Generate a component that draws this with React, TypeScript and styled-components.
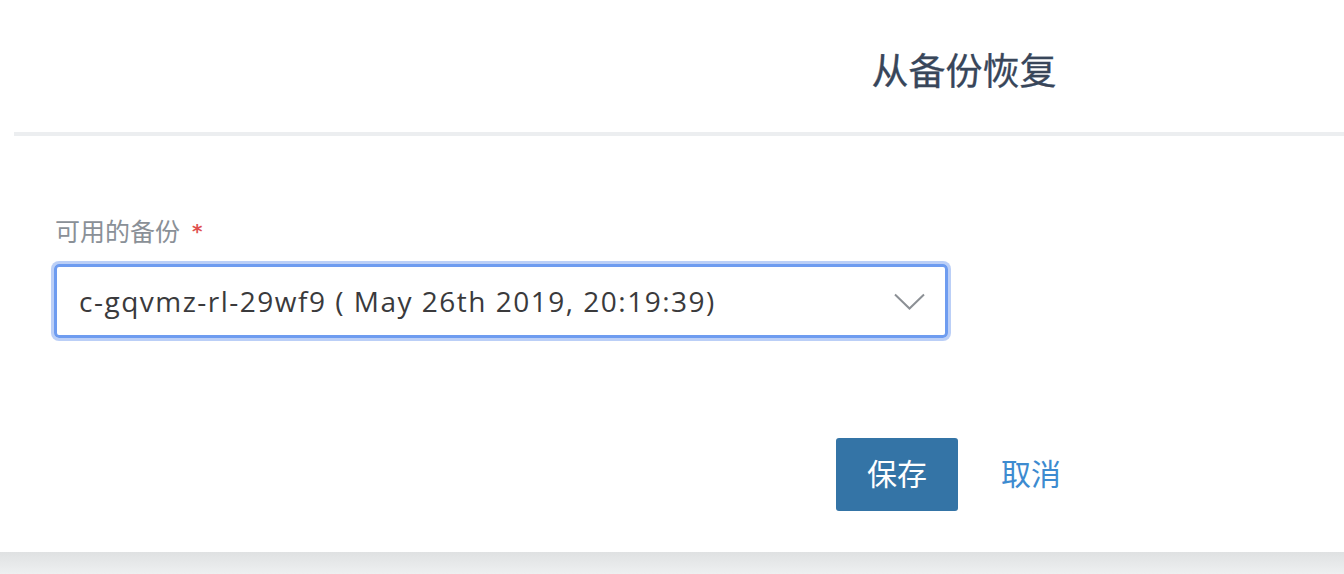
import React from "react";
import styled, { createGlobalStyle } from "styled-components";

const Global = createGlobalStyle`
  html, body { margin: 0; padding: 0; }
  body {
    overflow: hidden;
    background: #ffffff;
    font-family: "Open Sans", "Noto Sans CJK SC", sans-serif;
  }
`;

const Page = styled.div`
  width: 1344px;
  height: 574px;
  overflow: hidden;
  display: flex;
  flex-direction: column;
`;

const Modal = styled.div`
  width: 1900px;
  height: 552px;
  padding-left: 14px;
  background: #ffffff;
  flex: none;
`;

const Header = styled.div`
  height: 132px;
  box-sizing: border-box;
  padding-top: 49px;
  display: flex;
  justify-content: center;
`;

const Title = styled.h1`
  margin: 0;
  font-family: "Noto Sans CJK SC", sans-serif;
  font-weight: 400;
  font-size: 37px;
  line-height: 40px;
  color: #38465a;
  -webkit-text-stroke: 0.3px #38465a;
`;

const Divider = styled.div`
  height: 4px;
  background: #eceef0;
`;

const Body = styled.div`
  padding: 78px 0 0 40px;
  display: flex;
  flex-direction: column;
`;

const Label = styled.label`
  font-family: "Noto Sans CJK SC", sans-serif;
  font-size: 25px;
  line-height: 32px;
  color: #8a9097;
  display: flex;
  align-items: center;
  gap: 12px;
  padding-left: 1px;
`;

const Required = styled.span`
  color: #e0504f;
  font-size: 20px;
  font-weight: 700;
  font-family: "DejaVu Sans", sans-serif;
  line-height: 1;
  margin-top: 2px;
`;

const Select = styled.div`
  margin-top: 18px;
  width: 894px;
  height: 74px;
  box-sizing: border-box;
  border: 3px solid #6e9cf0;
  border-radius: 5px;
  box-shadow: 0 0 0 3px rgba(120, 160, 240, 0.5);
  display: flex;
  align-items: center;
  justify-content: space-between;
  padding: 0 20px 0 22px;
`;

const Value = styled.span`
  font-family: "Open Sans", sans-serif;
  font-size: 28px;
  letter-spacing: 1.5px;
  color: #3a3a3c;
`;

const Actions = styled.div`
  margin-top: 100px;
  padding-left: 782px;
  display: flex;
  align-items: center;
  gap: 43px;
`;

const SaveButton = styled.button`
  width: 122px;
  height: 73px;
  border: none;
  border-radius: 3px;
  background: #3474a6;
  color: #ffffff;
  font-family: "Noto Sans CJK SC", sans-serif;
  font-size: 30px;
  padding: 0 0 6px;
`;

const CancelButton = styled.button`
  border: none;
  background: transparent;
  color: #3d8bd0;
  font-family: "Noto Sans CJK SC", sans-serif;
  font-size: 30px;
  padding: 0 0 6px;
`;

const Footer = styled.div`
  flex: 1;
  background: linear-gradient(#dfe1e2, #eef0f1);
`;

const Chevron = () => (
  <svg width="31" height="17" viewBox="0 0 31 17" fill="none">
    <path d="M1 1.5 L15.5 15.5 L30 1.5" stroke="#8c9095" strokeWidth="2" />
  </svg>
);

export default function App() {
  return (
    <>
      <Global />
      <Page>
        <Modal>
          <Header>
            <Title>从备份恢复</Title>
          </Header>
          <Divider />
          <Body>
            <Label>
              可用的备份<Required>*</Required>
            </Label>
            <Select>
              <Value>c-gqvmz-rl-29wf9 ( May 26th 2019, 20:19:39)</Value>
              <Chevron />
            </Select>
            <Actions>
              <SaveButton>保存</SaveButton>
              <CancelButton>取消</CancelButton>
            </Actions>
          </Body>
        </Modal>
        <Footer />
      </Page>
    </>
  );
}
